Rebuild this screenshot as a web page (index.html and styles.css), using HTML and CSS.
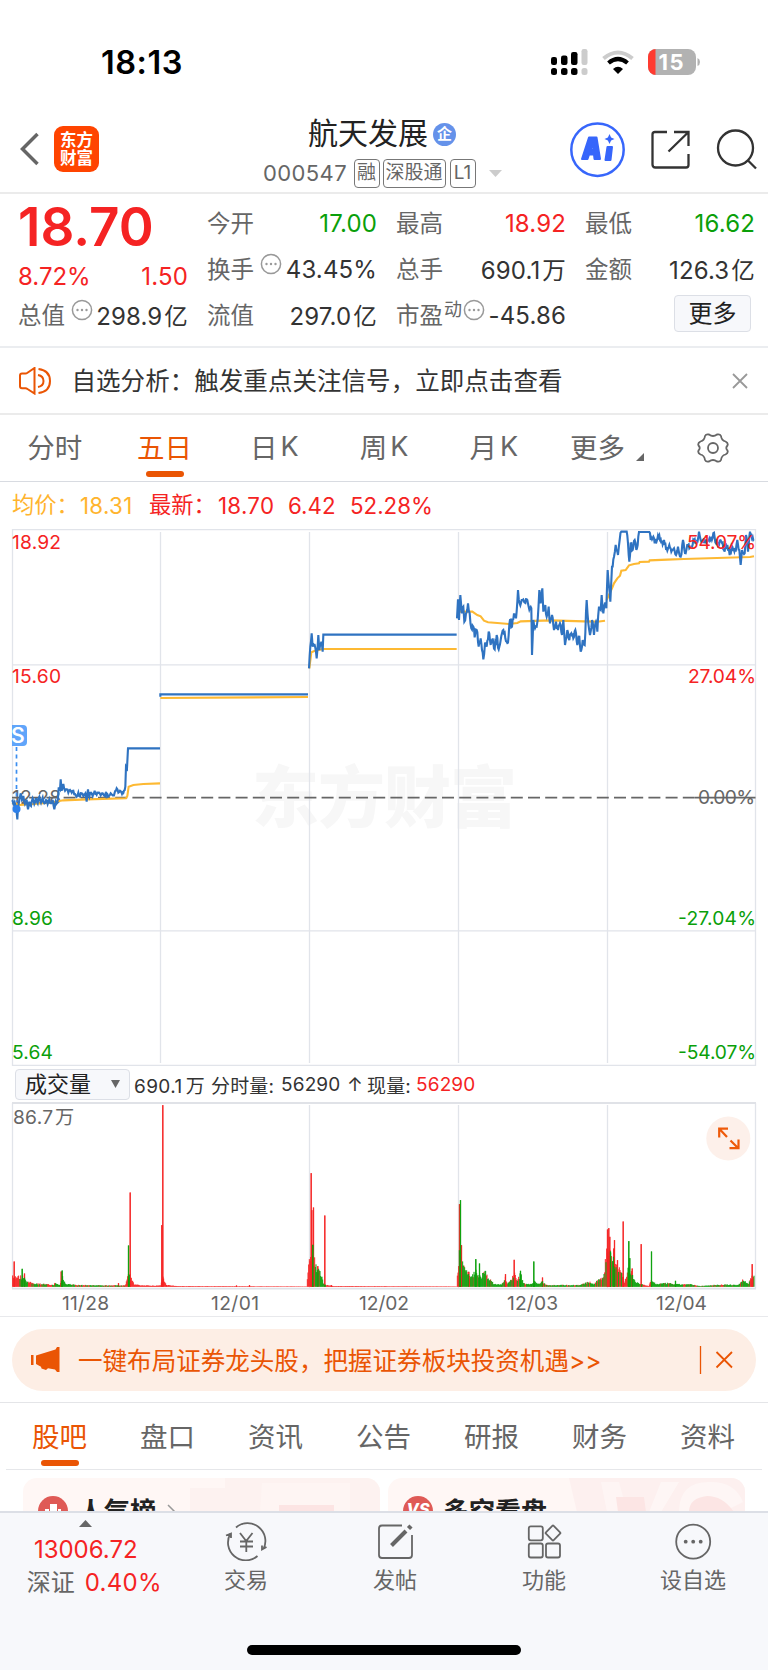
FILE: index.html
```
<!DOCTYPE html>
<html lang="zh-CN">
<head>
<meta charset="utf-8">
<title>航天发展 000547</title>
<link rel="stylesheet" href="styles.css">
</head>
<body>
<div class="app">
  <header class="status">
    <span class="clock">18:13</span>
    <svg class="status-icons" width="152" height="28" viewBox="550 48 152 28">
      <g fill="#000"><rect x="551" y="57" width="6" height="8" rx="2.2"/><rect x="561" y="55.500" width="6.500" height="9.500" rx="2.200"/><rect x="571" y="52" width="6.500" height="13" rx="2.200"/>
      <rect x="551" y="68" width="6" height="7" rx="2.500"/><rect x="561" y="68" width="6.500" height="7" rx="2.500"/><rect x="571" y="68" width="6.500" height="7" rx="2.500"/></g>
      <g fill="#ccc"><rect x="581.500" y="49" width="6" height="16" rx="2.200"/><rect x="581.500" y="68" width="6" height="7" rx="2.500"/></g>
      <path d="M603.500 58.500Q618 46.500 632.500 58.500" fill="none" stroke="#ccc" stroke-width="4"/>
      <path d="M608.500 63Q618 55 627.500 63" fill="none" stroke="#000" stroke-width="4.200"/>
      <path d="M613 69Q618 64.500 623 69L618 74Z"/>
      <clipPath id="batt"><rect x="648" y="49" width="48" height="26" rx="8"/></clipPath>
      <g clip-path="url(#batt)"><rect x="648" y="49" width="48" height="26" fill="#b2b2b2"/><rect x="648" y="49" width="7.500" height="26" fill="#ff3b30"/></g>
      <path d="M697.500 58v8q2.500-1 2.500-4t-2.500-4" fill="#b2b2b2"/>
      <text x="658.500" y="70" textLength="25" class="batt-text">15</text>
    </svg>
  </header>

  <div class="titlebar">
    <div class="left">
      <svg width="20" height="34" viewBox="0 0 20 34"><path d="M18.500 2L3.500 17 18.500 32" fill="none" stroke="#666" stroke-width="3.500"/></svg>
      <div class="logo"><span>东方</span><span>财富</span></div>
    </div>
    <div class="center">
      <div class="name"><span>航天发展</span><span class="ent">企</span></div>
      <div class="sub"><span class="code">000547</span><span class="tag">融</span><span class="tag wide">深股通</span><span class="tag">L1</span>
        <svg class="caret" width="13" height="7"><path d="M0 0h13L6.500 7z" fill="#ccc"/></svg></div>
    </div>
    <svg class="actions" width="190" height="56" viewBox="568 122 190 56" fill="none">
      <circle cx="597.500" cy="149.700" r="26.200" stroke="#3766fb" stroke-width="2.500"/>
      <g fill="#3766fb" stroke="#3766fb" stroke-width="2" stroke-linejoin="round"><path fill-rule="evenodd" d="M582 159L589 137.500H596.500L600 159H594.500L594 154.500H589L587.500 159ZM590.500 149.500H593.500L593 143Z"/><path d="M607.500 147H612L610.500 160H605.500Z"/></g>
      <path d="M609.500 134l1.600 3.400 3.400 1.600-3.400 1.600-1.600 3.400-1.600-3.400-3.400-1.600 3.400-1.600z" fill="#3766fb"/>
      <path d="M667 132H655Q652.500 132 652.500 134.500V164.500Q652.500 167.500 655.500 167.500H686Q688.500 167.500 688.500 165V154M674 132H688.500V146M688 132.500L668.500 151.500" stroke="#333" stroke-width="2.300"/>
      <circle cx="735.500" cy="148" r="17.500" stroke="#333" stroke-width="2.300"/><path d="M748 160.500L756 168.500" stroke="#333" stroke-width="2.300"/>
    </svg>
  </div>

  <section class="quote">
    <div class="col c1">
      <div class="price">18.70</div>
      <div class="pair chg red"><b>8.72%</b><b>1.50</b></div>
      <div class="pair"><i>总值</i><svg class="dots" viewBox="0 0 22 22"><use href="#more"/></svg><b>298.9<em>亿</em></b></div>
    </div>
    <div class="col">
      <div class="pair"><i>今开</i><b class="green">17.00</b></div>
      <div class="pair"><i>换手</i><svg class="dots" viewBox="0 0 22 22"><use href="#more"/></svg><b>43.45%</b></div>
      <div class="pair"><i>流值</i><b>297.0<em>亿</em></b></div>
    </div>
    <div class="col">
      <div class="pair"><i>最高</i><b class="red">18.92</b></div>
      <div class="pair"><i>总手</i><b>690.1<em>万</em></b></div>
      <div class="pair"><i>市盈<sup>动</sup></i><svg class="dots near" viewBox="0 0 22 22"><use href="#more"/></svg><b>-45.86</b></div>
    </div>
    <div class="col">
      <div class="pair"><i>最低</i><b class="green">16.62</b></div>
      <div class="pair"><i>金额</i><b>126.3<em>亿</em></b></div>
      <div class="pair more"><button>更多</button></div>
    </div>
  </section>

  <section class="notice">
    <svg width="34" height="28" viewBox="18 366 34 28" fill="none" stroke="#ea5504" stroke-width="2"><path d="M20 374.500q0-2 2-2h3.500q1 0 2-.7L34.500 367v25.500L27.500 388q-1-.7-2-.7H22q-2 0-2-2zM38 374q5.500 1 5.500 6t-5.500 6M38.500 368q11.500 1.500 11.500 12t-11.500 12"/></svg>
    <span>自选分析：触发重点关注信号，立即点击查看</span>
    <svg class="close" width="16" height="16" viewBox="0 0 16 16"><path d="M1 1l14 14M15 1L1 15" stroke="#999" stroke-width="1.800"/></svg>
  </section>

  <nav class="tabs top">
    <span>分时</span><span class="on">五日</span><span>日<u>K</u></span><span>周<u>K</u></span><span>月<u>K</u></span>
    <span class="moretab">更多<svg width="8" height="8"><path d="M8 0v8H0z" fill="#666"/></svg></span>
    <span class="gear"><svg width="32" height="30" viewBox="-16 -15 32 30" fill="none" stroke="#666" stroke-width="1.800" stroke-linejoin="round"><circle r="5"/><path d="M-4-13.500Q0-10.500 4-13.500Q7-14.200 8-12Q8.500-7.500 12.500-6.500Q15.500-5 14.500-2.500Q12 0 14.500 2.500Q15.500 5 12.500 6.500Q8.500 7.500 8 12Q7 14.200 4 13.500Q0 10.500-4 13.500Q-7 14.200-8 12Q-8.500 7.500-12.500 6.500Q-15.500 5-14.500 2.500Q-12 0-14.500-2.500Q-15.500-5-12.500-6.500Q-8.500-7.500-8-12Q-7-14.200-4-13.500Z"/></svg></span>
  </nav>

  <div class="legend"><span class="gold">均价：</span><span class="gold">18.31</span><span>最新：</span><span>18.70</span><span>6.42</span><span>52.28%</span></div>

  <svg class="chart" width="768" height="537" viewBox="0 529 768 537">
    <text class="watermark" x="252" y="822" textLength="265">东方财富</text>
    <path d="M12.500 529.500H755.500V1065.500H12.500ZM12.500 664.800H755.500M12.500 930.800H755.500M160.500 532V1063M309.500 532V1063M458.500 532V1063M607.500 532V1063" fill="none" stroke="#e1e4ea" stroke-width="1.300"/>
    <path d="M12 797.700H695" stroke="#666" stroke-width="1.800" stroke-dasharray="12 5.200"/>
    <path d="M695 797.700H755.500" stroke="#666" stroke-width="1.800"/>
    <g class="label">
      <text x="12" y="803.500" textLength="49" fill="#666">12.28</text>
      <text x="698" y="803.500" textLength="57" fill="#666">0.00%</text>
    </g>
    <g id="lines" fill="none"></g>
    <g class="label">
      <text class="r" x="12" y="548.500" textLength="49">18.92</text>
      <text class="r" x="12" y="683" textLength="49">15.60</text>
      <text class="g" x="12" y="925" textLength="41">8.96</text>
      <text class="g" x="12" y="1058.500" textLength="41">5.64</text>
      <text class="r" x="687" y="548.500" textLength="69">54.07%</text>
      <text class="r" x="688" y="683" textLength="68">27.04%</text>
      <text class="g" x="678" y="925" textLength="78">-27.04%</text>
      <text class="g" x="678" y="1058.500" textLength="78">-54.07%</text>
    </g>
    <path d="M12 725H23Q27 725 27 729V742Q27 746 23 746H12Z" fill="#60a5fa"/>
    <text class="sell" x="11" y="742.500">S</text>
    <path d="M16.500 747V802" stroke="#3b8ef0" stroke-width="1.700" stroke-dasharray="4 3.600"/>
    <circle cx="16.500" cy="809" r="4" fill="#2b7fea"/>
  </svg>

  <div class="indicator">
    <button><span>成交量</span><svg width="9" height="8"><path d="M0 0h9L4.500 8z" fill="#666"/></svg></button>
    <span class="i1">690.1<em>万</em></span><span class="i2">分时量:</span><span class="i3">56290</span><span class="i4">↑</span><span class="i5">现量:</span><span class="red">56290</span>
  </div>

  <svg class="volume" width="768" height="214" viewBox="0 1102 768 214">
    <path d="M12.500 1103V1288.500M755.500 1103V1288.500M309.500 1105V1288M458.500 1105V1288M607.500 1105V1288" stroke="#e1e4ea" stroke-width="1.300"/>
    <path d="M12 1103H756M12 1288.700H756" stroke="#e0e2e7" stroke-width="1.800"/>
    <path id="volr" stroke="#f52323" stroke-width="1"/>
    <path id="volg" stroke="#0a9f0a" stroke-width="1"/>
    <g class="label" fill="#666">
      <text x="13" y="1124" textLength="40">86.7</text><text x="55" y="1124">万</text>
      <text x="62" y="1310" textLength="47">11/28</text><text x="211" y="1310" textLength="48">12/01</text><text x="359" y="1310" textLength="50">12/02</text><text x="507" y="1310" textLength="51">12/03</text><text x="656" y="1310" textLength="51">12/04</text>
    </g>
    <circle cx="728.300" cy="1138.500" r="22" fill="#fdf0ea"/>
    <path d="M728 1128.700H719.200V1137.500M719.500 1129L727 1137M729.500 1148.200H738.500V1139.500M738 1148L730.500 1140.500" fill="none" stroke="#ee5a0a" stroke-width="2.200"/>
  </svg>

  <section class="promo-wrap">
    <div class="promo">
      <svg width="30" height="26" viewBox="30 1347 30 26" fill="#ea5504"><path d="M31 1355h2.500v10H31zM36 1355.500L55.500 1349.500 57 1347h2.500v25H57l-2-2.500-7-1.300-2 1.800-4.500-1.500-.5-1.800L36 1364z"/></svg>
      <span>一键布局证券龙头股，把握证券板块投资机遇&gt;&gt;</span>
      <svg class="promo-x" width="34" height="30" viewBox="700 1345 34 30" stroke="#ea5504" fill="none"><path d="M701.500 1346V1374" stroke-width="1.300"/><path d="M717.500 1352L733 1367.500M733 1352L717.500 1367.500" stroke-width="1.800"/></svg>
    </div>
  </section>

  <nav class="tabs lower">
    <span class="on">股吧</span><span>盘口</span><span>资讯</span><span>公告</span><span>研报</span><span>财务</span><span>资料</span>
  </nav>

  <section class="cards">
    <div class="card"><svg class="deco" width="190" height="34" viewBox="0 0 190 34"><path d="M0 10H35V0H190V34H0z" fill="#fdf2f0"/><path d="M72 5H160V34H70z" fill="#fef5f3"/><path d="M89 27H144V34H89z" fill="#fce4e3"/></svg>
      <svg class="badge" width="30" height="30"><circle cx="15" cy="15" r="15" fill="#df5a56"/><path d="M7 13h4v8H7zM12 8h7v14h-7zM20 13h3v8h-3z" fill="#fff"/></svg><strong>人气榜</strong>
      <svg class="chev" width="10" height="18"><path d="M1 1l8 8-8 8" fill="none" stroke="#999" stroke-width="1.500"/></svg></div>
    <div class="card"><svg class="deco vsdeco" width="176" height="34" viewBox="0 0 176 34"><path d="M0 0H176V34H8z" fill="#fdf0ef"/><path d="M32 4H50L58 34H38z" fill="#fef5f4"/><path d="M80 34L92 4H110L92 34zM110 34Q110 3 142 4Q166 4 174 24L158 32Q142 18 128 34z" fill="#fef6f5"/><path d="M47 19H75L77 34H49zM120 34Q120 20 138 18Q154 18 165 34z" fill="#fce5e4"/></svg>
      <div class="badge vs">VS</div><strong>多空看盘</strong></div>
  </section>

  <footer class="dock">
    <div class="index"><svg width="13" height="7"><path d="M6.500 0L13 7H0z" fill="#666"/></svg><b>13006.72</b><p>深证<b>0.40%</b></p></div>
    <div class="item"><svg width="44" height="40" viewBox="224 1521 44 40"><path d="M236 1527.500A17.800 17.800 0 0 1 263.500 1549M266.500 1547L262 1549.500V1545.500M257.500 1556A17.800 17.800 0 0 1 230.500 1533.500M226 1535.500L231 1533.500V1538M240 1533L246.200 1541 252.500 1533M240 1541.500H253M240 1546.500H253M246.300 1541V1552"/></svg><span>交易</span></div>
    <div class="item"><svg width="44" height="40" viewBox="373 1521 44 40"><path d="M402 1525.500H382Q379 1525.500 379 1528.500V1555Q379 1558 382 1558H409Q412 1558 412 1555V1535"/><path d="M391.500 1545.500L406 1531" stroke-width="4"/><path d="M408.500 1528.500L411 1526" stroke-width="4.500"/></svg><span>发帖</span></div>
    <div class="item"><svg width="44" height="40" viewBox="522 1521 44 40"><rect x="528.800" y="1526.300" width="14" height="14" rx="2"/><rect x="528.800" y="1543.500" width="14" height="14" rx="2"/><rect x="546" y="1543.500" width="14" height="14" rx="2"/><rect x="547.500" y="1527.500" width="11" height="11" rx="1" transform="rotate(45 553 1533)"/></svg><span>功能</span></div>
    <div class="item"><svg width="44" height="40" viewBox="671 1521 44 40"><circle cx="693.200" cy="1541.700" r="17"/><g fill="#666" stroke="none"><circle cx="685.700" cy="1541.700" r="1.900"/><circle cx="693.200" cy="1541.700" r="1.900"/><circle cx="700.700" cy="1541.700" r="1.900"/></g></svg><span>设自选</span></div>
    <div class="home"></div>
  </footer>
</div>
<svg width="0" height="0" class="defs"><defs><g id="more"><circle cx="11" cy="11" r="9.600" fill="none" stroke="#999" stroke-width="1.500"/><circle cx="6.500" cy="11" r="1.200" fill="#999"/><circle cx="11" cy="11" r="1.200" fill="#999"/><circle cx="15.500" cy="11" r="1.200" fill="#999"/></g></defs></svg>
<script src="chart.js"></script>
</body>
</html>
```
FILE: styles.css
```
* { box-sizing: border-box; }
body { margin: 0; background: #fff; font-family: Inter, "Noto Sans CJK SC", sans-serif; color: #333; }
svg { display: block; flex: none; }
i, em { font-style: normal; }
b { font-weight: 400; }
button { font: inherit; margin: 0; padding: 0; color: #222; background: #f7f8fb; border: 1.5px solid #dcdfe6; }
.red { color: #f52323; }
.green { color: #0a9f0a; }
.app { width: 768px; height: 1670px; overflow: hidden; display: flex; flex-direction: column; }
.defs { position: absolute; }

.status { height: 112px; padding: 48px 66px 0 101px; display: flex; justify-content: space-between; }
.clock { font-size: 32.500px; line-height: 30px; font-weight: 600; color: #000; letter-spacing: .5px; }
.batt-text { font: 700 22px Inter, sans-serif; fill: #fff; }

.titlebar { height: 82px; border-bottom: 2px solid #ebebeb; display: grid; grid-template-columns: 200px 1fr 200px; }
.titlebar .left { display: flex; align-items: center; padding: 0 0 4px 19px; gap: 15px; height: 78px; }
.logo { width: 45px; height: 46px; border-radius: 9px; background: #ff4400; color: #fff; display: flex; flex-direction: column; justify-content: center; align-items: center; font-size: 16.5px; line-height: 18.5px; font-weight: 700; }
.center { padding-top: 4px; }
.name { display: flex; align-items: center; padding-left: 108px; height: 34px; font-size: 30px; line-height: 34px; color: #222; gap: 5px; }
.ent { width: 23px; height: 23px; margin-top: 2px; border-radius: 50%; background: #6592ea; color: #fff; font-size: 15px; line-height: 22px; text-align: center; font-weight: 700; }
.sub { display: flex; align-items: center; height: 30px; margin-top: 8px; padding-left: 63px; color: #666; }
.code { font-size: 22px; width: 90.500px; letter-spacing: .4px; }
.tag { height: 29px; min-width: 26px; margin-right: 3px; border: 1.3px solid #777; border-radius: 4px; font-size: 19px; line-height: 26px; text-align: center; }
.tag.wide { width: 63px; margin-right: 4px; }
.caret { margin-left: 10px; }
.actions { margin-top: 10px; }

.quote { height: 154px; padding: 6px 13px 0 18px; display: grid; grid-template-columns: repeat(4, 170px); column-gap: 19px; border-bottom: 2px solid #ebedf0; }
.pair { height: 46px; display: flex; align-items: center; font-size: 24px; }
.pair i { color: #666; font-size: 23.500px; white-space: nowrap; padding-bottom: 2px; }
.pair b { margin-left: auto; white-space: nowrap; letter-spacing: .15px; }
.pair em { margin-left: 2px; font-size: 23.500px; }
.price { height: 54px; font-size: 53px; line-height: 54px; font-weight: 600; color: #f52323; letter-spacing: 0; }
.c1 .chg { height: 38px; padding-top: 7px; }
.c1 .chg b:first-child { margin-left: 0; letter-spacing: 0; }
.dots { width: 22px; height: 22px; margin: -10px -6px 0 6px; }
.dots.near { margin-left: 1px; }
.pair sup { font-size: 18px; line-height: 18px; vertical-align: 8px; margin-left: 1px; }
.more { justify-content: flex-end; padding: 0 4px 4px 0; }
.more button { width: 77px; height: 37px; border-radius: 4px; font-size: 24px; line-height: 35px; }

.notice { height: 67px; display: flex; align-items: center; padding: 0 20px 0 18px; border-bottom: 2px solid #ebebeb; font-size: 24.500px; }
.notice span { margin-left: 19.500px; padding-bottom: 2px; letter-spacing: .05px; }
.close { margin-left: auto; }

.tabs { display: grid; grid-template-columns: repeat(7, 1fr); font-size: 27.500px; color: #666; }
.tabs > span { display: flex; justify-content: center; align-items: center; position: relative; }
.tabs u { text-decoration: none; margin-left: 3px; font-size: 27px; }
.tabs .on { color: #ea5504; }
.tabs .on::after { content: ""; position: absolute; left: 50%; bottom: 4px; width: 38px; height: 6px; margin-left: -19px; border-radius: 3px; background: #ea5504; }
.top { height: 67px; border-bottom: 1.500px solid #d8dbe1; }
.top > span { padding-bottom: 4px; }
.top > .gear { padding-bottom: 1px; }
.moretab { gap: 11px; padding-left: 7px; }
.moretab svg { margin-top: 22px; }

.legend { height: 47px; padding-left: 12px; display: grid; grid-template-columns: 68px 69px 69px 70px 62px auto; align-items: center; font-size: 22.300px; color: #f52323; }
.legend span { line-height: 30px; }
.legend span:nth-child(1), .legend span:nth-child(3) { padding-bottom: 2px; }
.legend span:nth-child(2), .legend span:nth-child(4) { letter-spacing: .3px; }
.legend .gold { color: #ffb42e; }

.label { font: 19.200px Inter, "Noto Sans CJK SC", sans-serif; }
.label .r { fill: #f52323; }
.label .g { fill: #0a9f0a; }
.watermark { font: 900 67px "Noto Sans CJK SC", sans-serif; fill: #f7f7f7; }
.sell { font: 600 21px Inter, sans-serif; fill: #fff; }

.indicator { height: 36px; padding-left: 15px; display: flex; align-items: center; font-size: 19px; white-space: nowrap; letter-spacing: .15px; }
.indicator button { width: 115px; height: 31px; display: flex; align-items: center; justify-content: space-between; padding: 0 9px; border-radius: 4px; font-size: 22px; line-height: 28px; margin-right: 4px; }
.indicator em { margin-left: 3px; font-size: 19px; }
.i1 { width: 77px; letter-spacing: .4px; }
.i2 { width: 70px; }
.i3 { width: 66px; }
.i4 { width: 20px; }
.i5 { width: 49px; }

.promo-wrap { height: 87px; padding: 12px 12px 0; border-top: 1.500px solid #e8e9ec; border-bottom: 1.500px solid #e4e5e8; }
.promo { height: 62px; border-radius: 31px; background: #fdeee5; color: #ea5504; display: flex; align-items: center; padding: 0 23px 0 18px; font-size: 24.550px; }
.promo span { margin-left: 18px; padding-bottom: 2px; white-space: nowrap; }
.promo-x { margin-left: auto; }

.lower { height: 67px; margin: 0 6px; border-bottom: 1.500px solid #e6e7ea; }
.lower > span { padding: 0 1px 2px 0; }
.lower .on::after { bottom: 3px; }

.cards { height: 41px; overflow: hidden; padding: 8px 23px 0; display: grid; grid-template-columns: 1fr 1fr; gap: 8px; }
.card { height: 100px; border-radius: 14px; background: #fff7f5; padding: 18px 15px; display: flex; align-items: flex-start; position: relative; overflow: hidden; }
.deco { position: absolute; right: 0; top: 0; }
.badge { width: 30px; height: 30px; position: relative; }
.vs { border-radius: 50%; background: #df5a56; color: #fff; font-size: 16px; line-height: 26px; text-align: center; font-weight: 800; font-style: italic; }
.card strong { font-size: 26px; line-height: 32px; margin-left: 10px; position: relative; color: #222; }
.chev { margin: 8px 0 0 11px; position: relative; }

.dock { height: 159px; background: #f7f8fb; border-top: 2px solid #dcdfe6; display: grid; grid-template-columns: 171.500px repeat(4, 149px); grid-template-rows: 132px 10px; color: #666; font-size: 22px; }
.index { display: flex; flex-direction: column; align-items: center; padding-top: 7px; font-size: 24px; line-height: 30px; }
.index b { color: #f52323; letter-spacing: 0; }
.index > b { margin-top: 8px; }
.index p { margin: 3px 0 0; padding-left: 17px; white-space: nowrap; }
.index p b { margin-left: 10px; letter-spacing: .3px; }
.item { display: flex; flex-direction: column; align-items: center; padding-top: 8px; }
.item svg { fill: none; stroke: #666; stroke-width: 1.800; }
.item span { line-height: 30px; margin-top: 4px; }
.home { grid-column: 1 / -1; justify-self: center; width: 274px; height: 10px; border-radius: 5px; background: #000; }
```
FILE: chart.js
```
// Small repeatable noise source so that the minute series is stable.
let seed = 7;
const rnd = () => (seed = (seed * 16807) % 2147483647) / 2147483647;

const NS = "http://www.w3.org/2000/svg";
const lines = document.getElementById("lines");

// Points are in thirds of a pixel, offset by (ox, oy).
function draw(str, ox, oy, noise, color) {
  const p = str.trim().split(/\s+/).map(s => s.split(",").map(Number));
  const out = [];
  p.forEach((a, i) => {
    out.push(a);
    const b = p[i + 1];
    if (!b || !noise || b[1] === a[1]) return;
    const n = Math.floor((b[0] - a[0]) / 2);
    for (let k = 1; k < n; k++) {
      const t = k / n;
      out.push([a[0] + (b[0] - a[0]) * t, a[1] + (b[1] - a[1]) * t + (rnd() - .5) * noise]);
    }
  });
  const el = document.createElementNS(NS, "polyline");
  el.setAttribute("points", out.map(q => (ox + q[0] / 3).toFixed(2) + "," + (oy + q[1] / 3).toFixed(2)).join(" "));
  el.setAttribute("stroke", color);
  el.setAttribute("stroke-width", "2.1");
  lines.appendChild(el);
}
const GOLD = "#fdb933", BLUE = "#2f73c1";

draw("36,548 60,555 100,552 150,548 190,541 260,538 378,535 382,528 386,500 400,495 430,492 480,490", 0, 620, 0, GOLD);
draw("481,234 924,231", 0, 620, 0, GOLD);
draw("928,145 934,97 945,92 970,87 1370,87", 0, 620, 0, GOLD);
draw("222,635 265,635 280,645 290,649 300,662 312,667 340,669 375,672 400,669 410,664 500,661 600,664 640,665 663,662", 384, 400, 0, GOLD);
draw("668,600 684,565 690,550 700,535 708,527 712,512 725,510 735,496 750,492 765,490 767,486 795,485 797,481 850,479 900,477 1098,471 1110,469", 384, 400, 0, GOLD);

draw(`36,545 40,552 44,548 48,565 52,598 54,560 58,540 62,520 66,540 70,528 75,552 80,540 84,568 88,545 93,558 98,535 103,552
108,535 113,550 118,530 123,548 128,533 133,550 138,540 143,552 148,538 153,550 158,540 163,568 167,545 172,548 176,505
180,508 182,478 185,512 190,492 195,512 200,508 205,518 210,510 215,518 220,512 225,522 230,530 235,518 240,530 245,520
250,528 256,520 260,545 264,508 268,530 273,518 278,528 284,512 290,524 296,518 302,526 308,520 314,528 320,520 326,528
332,520 338,526 344,518 350,505 355,518 360,512 366,522 372,512 376,500 378,440 381,445 384,385 480,385`, 0, 620, 12, BLUE);
draw("481,230 481,223 924,223", 0, 620, 0, BLUE);
draw("927,145 931,80 935,40 938,80 944,75 950,115 955,45 958,90 964,65 968,95 970,44 1370,44", 0, 620, 14, BLUE);
draw(`219,655 222,598 225,660 229,585 234,640 238,620 241,665 246,640 252,610 257,640 262,685 268,680 272,712 278,690 284,740
290,715 298,778 303,730 308,740 314,695 320,735 326,715 332,748 338,705 344,748 350,720 358,690 364,715 372,728 378,660
384,680 390,640 396,655 402,570 407,610 413,600 420,605 428,598 434,620 442,625 444,765 448,660 453,685 458,680 461,660
466,570 470,610 475,565 478,635 484,615 488,650 494,620 498,670 504,645 510,690 516,665 522,690 528,670 534,705 538,660
543,735 550,690 556,720 562,700 568,715 574,690 580,735 586,710 590,755 596,720 602,735 608,600 613,670 618,705 624,660
630,705 636,665 640,695 645,620 650,630 653,585 658,640 663,610 667,625 671,510 675,560 679,605 684,500 690,470 695,435
702,465 707,420 712,395 728,395 732,430 736,485 740,430 746,450 752,420 757,450 761,435 765,396 796,396 800,420 808,410
816,430 824,412 832,430 840,420 848,445 856,435 862,455 870,445 876,465 882,440 890,470 897,420 905,460 912,435 920,440
930,420 938,430 945,395 952,425 960,420 970,425 980,420 990,398 996,430 1005,435 1012,425 1020,450 1030,435 1037,465
1045,440 1055,455 1060,420 1066,450 1070,495 1074,450 1082,460 1086,405 1092,455 1098,395 1104,415 1110,420`, 384, 400, 20, BLUE);

// Volume: envelope of bar heights as x,height,share-of-green, then single tall bars.
const env = [
  [38, 32, .6], [50, 28, .6], [64, 28, .7], [72, 30, .5], [82, 14, .6], [100, 10, .5], [130, 8, .6], [160, 5, .6], [165, 10, .8], [180, 5, .5],
  [188, 30, 1], [196, 9, .7], [230, 5, .6], [300, 4, .6], [360, 4, .3], [375, 4, .2], [381, 20, .2], [388, 45, .1], [394, 25, .1],
  [402, 7, 0], [420, 4, 0], [470, 3, 0], [482, 5, 0], [489, 28, 0], [500, 5, 0], [530, 2, 0], [920, 1, 0], [930, 90, .1], [944, 75, .7],
  [950, 50, .9], [962, 38, .8], [970, 12, .5], [978, 5, 0], [1000, 2, 0], [1370, 1, .1], [1378, 110, .5], [1386, 75, .8], [1394, 50, .8],
  [1412, 25, .8], [1428, 45, .7], [1442, 28, .8], [1455, 42, .8], [1470, 20, .7], [1482, 8, .8], [1505, 6, .7], [1516, 25, .3], [1522, 8, .7],
  [1534, 20, .6], [1542, 40, .2], [1552, 16, .7], [1562, 38, .8], [1570, 10, .8], [1595, 7, .8], [1604, 15, .8], [1614, 8, .6], [1628, 14, .5],
  [1640, 5, .7], [1740, 5, .6], [1768, 14, .7], [1780, 7, .6], [1798, 20, .2], [1812, 35, .2], [1822, 120, 0], [1832, 100, .7],
  [1842, 75, .3], [1856, 52, .4], [1866, 40, .1], [1874, 12, 0], [1884, 55, .7], [1896, 35, .7], [1904, 16, .8], [1918, 10, .3], [1930, 6, 0],
  [1946, 2, 0], [1954, 18, .9], [1968, 8, .9], [2004, 10, .7], [2030, 7, .8], [2070, 7, .7], [2100, 2, .7], [2140, 5, .5], [2176, 6, .6],
  [2214, 5, .6], [2230, 20, .7], [2244, 8, .6], [2256, 30, .5], [2263, 30, .9]
];
const spikes = [
  [42, 76, 0], [66, 54, 1], [73, 40, 0], [183, 46, 0], [186, 49, 1], [385, 124, 1], [390, 283, 0], [355, 11, 0], [485, 185, 0], [488, 545, 0],
  [709, 4, 0], [748, 5, 0], [933, 341, 0], [935, 230, 0], [940, 238, 0], [938, 126, 1], [953, 62, 0], [974, 214, 0], [994, 5, 0],
  [1378, 248, 0], [1381, 260, 1], [1384, 125, 0], [1427, 83, 1], [1438, 70, 1], [1406, 45, 0], [1516, 38, 0], [1542, 81, 0], [1561, 48, 1], [1601, 76, 1], [1627, 28, 0],
  [1822, 172, 0], [1826, 176, 0], [1829, 150, 0], [1831, 106, 1], [1843, 140, 0], [1841, 115, 0], [1852, 80, 0], [1869, 196, 0], [1886, 137, 1], [1889, 86, 1],
  [1896, 55, 0], [1923, 128, 0], [1954, 106, 1], [2026, 18, 1], [2256, 68, 0]
];
let red = "", green = "";
const bar = (x, h, g) => {
  const s = "M" + (x / 3).toFixed(2) + " 1286.8V" + (1286.8 - h / 3).toFixed(2);
  if (g) green += s; else red += s;
};
for (let i = 0; i < env.length - 1; i++) {
  const [x0, h0, g0] = env[i], [x1, h1] = env[i + 1];
  for (let x = x0; x < x1; x += 2) {
    const h = (h0 + (h1 - h0) * (x - x0) / (x1 - x0)) * (.75 + rnd() * .5);
    bar(x, h, rnd() < g0);
  }
}
spikes.forEach(s => { bar(s[0], s[1], s[2]); bar(s[0] + 1, s[1], s[2]); });
document.getElementById("volr").setAttribute("d", red);
document.getElementById("volg").setAttribute("d", green);
```
